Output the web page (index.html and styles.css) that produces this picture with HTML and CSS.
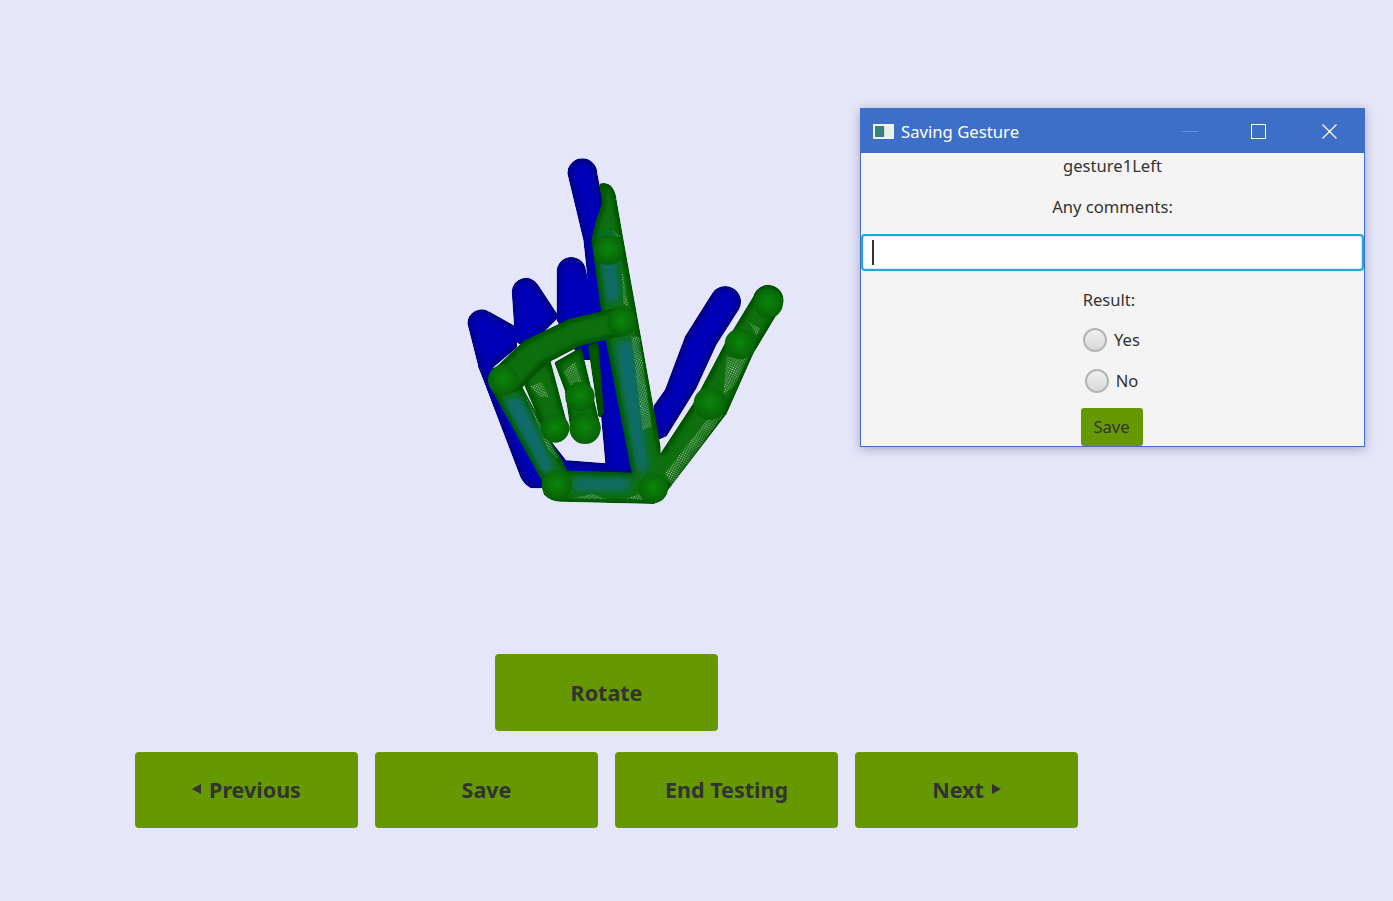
FILE: index.html
```html
<!DOCTYPE html>
<html lang="en">

<head>
  <meta charset="utf-8" />
  <title>Gesture Testing</title>
  <link rel="stylesheet" href="styles.css">
</head>

<body>
  <div class="hand-view">
    <svg class="hand" viewBox="0 0 1080 1140" width="360" height="380" xmlns="http://www.w3.org/2000/svg">
      <defs>
        <pattern id="dots" width="7" height="7" patternUnits="userSpaceOnUse" patternTransform="rotate(25)">
          <rect x="0" y="0" width="2.4" height="2.4" fill="#eef2ee" />
          <rect x="3.5" y="3.5" width="2.4" height="2.4" fill="#eef2ee" />
        </pattern>
        <radialGradient id="ball" cx="50%" cy="45%" r="55%">
          <stop offset="0" stop-color="#0c860c" />
          <stop offset="0.7" stop-color="#086c08" />
          <stop offset="1" stop-color="#066006" />
        </radialGradient>
        <filter id="shade-blue" x="-10%" y="-10%" width="120%" height="120%">
          <feMorphology in="SourceAlpha" operator="erode" radius="8" result="inner" />
          <feGaussianBlur in="inner" stdDeviation="10" result="glow" />
          <feFlood flood-color="#0000b8" />
          <feComposite in2="glow" operator="in" result="core" />
          <feMerge result="all">
            <feMergeNode in="SourceGraphic" />
            <feMergeNode in="core" />
          </feMerge>
          <feComposite in="all" in2="SourceAlpha" operator="in" />
        </filter>
        <filter id="shade-green" x="-10%" y="-10%" width="120%" height="120%">
          <feMorphology in="SourceAlpha" operator="erode" radius="8" result="inner" />
          <feGaussianBlur in="inner" stdDeviation="9" result="glow" />
          <feFlood flood-color="#0a700a" />
          <feComposite in2="glow" operator="in" result="core" />
          <feMerge result="all">
            <feMergeNode in="SourceGraphic" />
            <feMergeNode in="core" />
          </feMerge>
          <feComposite in="all" in2="SourceAlpha" operator="in" />
        </filter>
        <filter id="soft" x="-30%" y="-30%" width="160%" height="160%">
          <feGaussianBlur stdDeviation="12" />
        </filter>
      </defs>

      <!-- blue hand -->
      <g class="blue" filter="url(#shade-blue)">
        <path d="M388 100A39 39 0 0 1 466 100L505 300L575 994L504 994L470 620L436 300Z" />
        <path d="M356 398A38 38 0 0 1 432 392L465 540L455 654L425 654L356 540Z" />
        <path d="M221 455A37 37 0 0 1 290 438L350 530L260 620L231 600Z" />
        <path d="M88 550A37 37 0 0 1 145 520L225 565L225 620L130 700L121 680Z" />
        <path d="M121 680L140 666L375 966L500 976L500 994L300 1039L275 1039Q256 1030 246 1008Z" />
        <path d="M820 465A39 39 0 0 1 892 505L824 612L764 742L676 884L654 894L646 800L680 752L740 592Z" />
      </g>

      <!-- green curled fingers, under the knuckle bar -->
      <g class="green" filter="url(#shade-green)">
        <path d="M250 715L325 660L378 860A33 33 0 0 1 312 860Z" />
      </g>
      <g class="green" filter="url(#shade-green)">
        <path d="M350 670L420 630L476 860A40 40 0 0 1 396 860L380 750Z" />
      </g>
      <g class="green" filter="url(#shade-green)">
        <path d="M450 620L470 615L486 815L480 825Z" />
      </g>

      <!-- green hand -->
      <g class="green" filter="url(#shade-green)">
        <path d="M484 136Q518 130 524 180L543 290L588 540L656 920L656 994L580 994L497 570L460 300L474 240L492 190Z" />
        <path d="M945 472A39 39 0 0 1 1024 490L935 638L855 818L680 1046L650 1079L586 1000L655 960L765 792L860 612Z" />
        <path d="M156 740L240 740L375 990L330 1064L311 1020Z" />
        <path d="M316 1030L350 996L640 1006L674 1050Q665 1079 640 1086L360 1079Q335 1079 316 1060Z" />
      </g>
      <g class="green" filter="url(#shade-green)">
        <path d="M156 700L256 606L392 541L540 506Q584 510 584 545Q580 579 540 584L420 612L312 668L236 746Q190 764 170 745Q151 728 151 710Z" />
      </g>

      <!-- blue showing through the green tubes -->
      <g class="tint" filter="url(#soft)">
        <path d="M480 290L515 280L540 480L500 490Z" />
        <path d="M525 610L575 600L625 1000L590 990Z" />
        <path d="M190 780L240 770L345 990L310 1000Z" />
        <path d="M400 1015L570 1015L570 1050L400 1050Z" />
      </g>

      <!-- stipple on the thin parts of the mesh -->
      <g class="stipple" fill="url(#dots)">
        <path d="M860 650L925 650L885 735L850 765Z" />
        <path d="M805 835L850 825L695 1035L675 1000Z" />
        <path d="M925 545L960 565L950 585Z" />
        <path d="M574 590L598 590L635 860L608 870Z" />
        <path d="M545 380L565 500L550 490Z" />
        <path d="M515 270L545 290L530 290Z" />
        <path d="M248 750L300 850L358 960L325 930Z" />
        <path d="M390 1075L460 1062L500 1078Z" />
        <path d="M560 1075L600 1062L610 1080Z" />
        <path d="M270 740L305 725L325 770L300 770Z" />
        <path d="M370 695L405 665L425 725L395 740Z" />
      </g>

      <!-- joints -->
      <g fill="url(#ball)">
        <circle cx="345" cy="865" r="43" />
        <circle cx="420" cy="770" r="44" />
        <circle cx="435" cy="865" r="47" />
        <circle cx="505" cy="330" r="45" />
        <circle cx="350" cy="1035" r="45" />
        <circle cx="640" cy="1045" r="44" />
        <circle cx="190" cy="720" r="46" />
        <circle cx="545" cy="545" r="44" />
        <circle cx="985" cy="490" r="44" />
        <circle cx="900" cy="612" r="46" />
        <circle cx="810" cy="790" r="49" />
      </g>
    </svg>
  </div>

  <div class="controls">
    <div class="control-row">
      <button class="action action-tall">Rotate</button>
    </div>
    <div class="control-row">
      <button class="action"><span class="arrow arrow-left"></span>Previous</button>
      <button class="action">Save</button>
      <button class="action">End Testing</button>
      <button class="action">Next<span class="arrow arrow-right"></span></button>
    </div>
  </div>

  <div class="dialog">
    <div class="titlebar">
      <span class="app-icon"></span>
      <span class="title">Saving Gesture</span>
      <span class="win-min"></span>
      <span class="win-max"></span>
      <svg class="win-close" viewBox="0 0 15 15" width="15" height="15" xmlns="http://www.w3.org/2000/svg">
        <path d="M0.5 0.5L14.5 14.5M14.5 0.5L0.5 14.5" fill="none" stroke="#fff" stroke-width="1.2" />
      </svg>
    </div>
    <div class="dialog-body">
      <div class="line line-name">gesture1Left</div>
      <div class="line line-comments">Any comments:</div>
      <div class="comment-input"><span class="caret"></span></div>
      <div class="line line-result">Result:</div>
      <label class="radio radio-yes"><span class="radio-dot"></span>Yes</label>
      <label class="radio radio-no"><span class="radio-dot"></span>No</label>
      <button class="dialog-save">Save</button>
    </div>
  </div>
</body>

</html>
```

FILE: styles.css
```css
body {
  margin: 0;
  height: 901px;
  overflow: hidden;
  background: #e6e6fa;
  font-family: "Noto Sans", Arial, sans-serif;
  color: #333;
}

.hand-view {
  padding: 140px 0 0 440px;
  height: 380px;
}

.hand {
  display: block;
}

.blue {
  fill: #00007c;
  stroke: #00007c;
  stroke-width: 12;
  stroke-linejoin: round;
}

.green {
  fill: #044c04;
  stroke: #044c04;
  stroke-width: 12;
  stroke-linejoin: round;
}

.tint { fill: #0a6a78; }
.stipple { opacity: 0.75; }

.controls {
  width: 943px;
  margin: 134px 0 0 135px;
  display: flex;
  flex-direction: column;
  gap: 21px;
}

.control-row {
  display: flex;
  justify-content: center;
  gap: 17px;
}

.action {
  box-sizing: border-box;
  width: 223px;
  height: 76px;
  padding: 0 0 2px;
  border: none;
  border-radius: 4px;
  background: #669900;
  color: #333;
  font-family: "Noto Sans", Arial, sans-serif;
  font-size: 21.5px;
  font-weight: 700;
  display: flex;
  align-items: center;
  justify-content: center;
}

.action-tall {
  height: 77px;
  padding-bottom: 1px;
}

.arrow {
  width: 0;
  height: 0;
  border-top: 5px solid transparent;
  border-bottom: 5px solid transparent;
}

.arrow-left {
  border-right: 9px solid #333;
  margin-right: 8px;
}

.arrow-right {
  border-left: 9px solid #333;
  margin-left: 8px;
}

.dialog {
  position: absolute;
  left: 860px;
  top: 108px;
  width: 503px;
  height: 337px;
  border: 1px solid #3d6fc8;
  background: #f4f4f4;
  box-shadow: 0 2px 10px rgba(40, 40, 90, 0.35);
}

.titlebar {
  height: 44px;
  background: #3d6fc8;
  color: #fff;
  display: flex;
  align-items: center;
  padding-left: 12px;
}

.app-icon {
  width: 16px;
  height: 11px;
  border: 2px solid #eef2ee;
  border-right-width: 3px;
  background: linear-gradient(90deg, #2f8a72 0, #3c7c88 55%, #e8eee2 60%);
}

.title {
  margin-left: 7px;
  font-size: 16.7px;
  flex: 1;
}

.win-min {
  width: 16px;
  height: 1px;
  background: #6d92d5;
  margin-right: 53px;
}

.win-max {
  width: 13px;
  height: 13px;
  border: 1px solid #fff;
  margin-right: 56px;
}

.win-close {
  margin-right: 27px;
}

.dialog-body {
  display: flex;
  flex-direction: column;
  align-items: center;
  font-size: 16.6px;
}

.line {
  height: 24px;
  line-height: 24px;
}

.line-name { margin-top: 1px; }
.line-comments { margin-top: 17px; }

.comment-input {
  align-self: stretch;
  box-sizing: border-box;
  height: 37px;
  margin-top: 15px;
  padding: 4px 0 0 9px;
  background: #fff;
  border: 2px solid #1fa8d8;
  border-radius: 4px;
  box-shadow: inset 0 0 0 1px #d5eef8;
}

.caret {
  display: block;
  width: 2px;
  height: 25px;
  background: #333;
}

.line-result {
  margin: 17px 7px 0 0;
}

.radio {
  box-sizing: border-box;
  display: flex;
  align-items: center;
  gap: 7px;
  height: 24px;
  margin-right: 2px;
  padding-bottom: 1px;
  color: #333;
}

.radio-yes { margin-top: 16px; }
.radio-no { margin-top: 17px; }

.radio-dot {
  flex: none;
  box-sizing: border-box;
  width: 24px;
  height: 24px;
  border: 2px solid #b4b4b4;
  border-radius: 50%;
  background: linear-gradient(#f0f0f0, #d8d8d8);
}

.dialog-save {
  width: 62px;
  height: 38px;
  margin: 15px 2px 0 0;
  padding: 0 0 2px;
  border: none;
  border-radius: 3px;
  background: #669900;
  color: #333;
  font-family: "Noto Sans", Arial, sans-serif;
  font-size: 16.6px;
}
```
